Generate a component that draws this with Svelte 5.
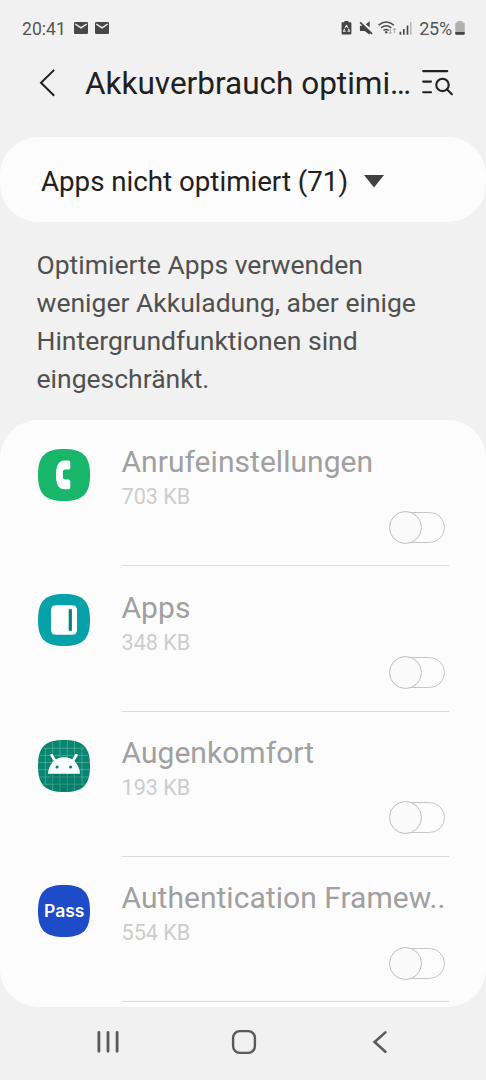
<script>
  const apps = [
    { name: 'Anrufeinstellungen', size: '703 KB', icon: 'phone' },
    { name: 'Apps', size: '348 KB', icon: 'edge' },
    { name: 'Augenkomfort', size: '193 KB', icon: 'android' },
    { name: 'Authentication Framew..', size: '554 KB', icon: 'pass' }
  ];

  const squircle = 'M26 0C45 0 52 7 52 26S45 52 26 52S0 45 0 26S7 0 26 0Z';
  const colors = {
    phone: '#18b66b',
    edge: '#07a1a9',
    android: '#078571',
    pass: '#1e4bc8'
  };

  let enabled = $state(apps.map(() => false));

  function toggle(i) {
    enabled[i] = !enabled[i];
  }
</script>

<div class="screen">
  <div class="status-bar">
    <span class="clock">20:41</span>
    <div class="mails">
      {#each [0, 1] as n (n)}
        <svg width="14" height="12" viewBox="0 0 14 12">
          <rect width="14" height="12" rx="1.2" fill="#484848" />
          <path d="M1.3 2L7 5.9L12.7 2" fill="none" stroke="#f1f1f1" stroke-width="1.5" />
        </svg>
      {/each}
    </div>

    <svg class="status-icons" width="74" height="18" viewBox="0 0 74 18">
      <!-- battery saver -->
      <path d="M3.4 2.3V1H7.4V2.3H9.4Q10.4 2.3 10.4 3.3V13.6Q10.4 14.6 9.4 14.6H1.6Q.6 14.6 .6 13.6V3.3Q.6 2.3 1.6 2.3Z" fill="#454545" />
      <path d="M4 7.8L5.5 5.6L7 7.8M3.6 8.8L2.6 11.2H4.6M7.4 8.8L8.4 11.2H6.4" fill="none" stroke="#f1f1f1" stroke-width="1.1" />
      <!-- sound off -->
      <path d="M18.6 2.9L19.7 1.8L31.6 13.2L30.5 14.4L28.7 12.9V14.8L23.6 10.9H18.9V5.7H21.4Z" fill="#454545" />
      <path d="M24.8 4.2L28.7 1.2V7.6Z" fill="#454545" />
      <!-- wifi -->
      <g fill="none" stroke="#4c4c4c" stroke-width="1.5">
        <path d="M37.6 5.1Q45.2-1.2 52.8 5.1" />
        <path d="M40.1 7.9Q45.2 3.7 50.3 7.9" />
        <path d="M42.5 10.5Q45.2 8.3 47.9 10.5" />
      </g>
      <circle cx="45.2" cy="12.2" r="1.2" fill="#484848" />
      <path d="M49.3 9V14M47.9 12.4L49.3 13.9L50.7 12.4M53.4 13V8M52 9.7L53.4 8.2L54.8 9.7" fill="none" stroke="#a5a5a5" stroke-width="1" />
      <!-- signal -->
      <path d="M59.4 11.8V14.8M62.8 8.9V14.8M66.5 5.4V14.8" stroke="#484848" stroke-width="1.7" />
      <path d="M69.8 2V14.8" stroke="#b5b5b5" stroke-width="1.5" />
    </svg>
    <span class="percent">25%</span>
    <svg class="battery" width="10" height="14" viewBox="0 0 10 14">
      <path d="M2.5 1.5V0H7.2V1.5H8.6Q9.7 1.5 9.7 2.6V12.7Q9.7 13.8 8.6 13.8H1.4Q.3 13.8 .3 12.7V2.6Q.3 1.5 1.4 1.5Z" fill="#b0b0b0" />
      <path d="M.3 11H9.7V12.7Q9.7 13.8 8.6 13.8H1.4Q.3 13.8 .3 12.7Z" fill="#454545" />
    </svg>
  </div>

  <header class="header">
    <button class="icon-btn back" aria-label="Zurück">
      <svg width="18" height="30" viewBox="0 0 18 30">
        <path d="M16.2 1.9L3 14.8L16.2 27.8" fill="none" stroke="#202020" stroke-width="2" />
      </svg>
    </button>
    <h1>Akkuverbrauch optimi…</h1>
    <button class="icon-btn" aria-label="Suche">
      <svg width="34" height="28" viewBox="0 0 34 28">
        <g fill="none" stroke="#202020" stroke-width="2.1" stroke-linecap="round">
          <path d="M2.2 2.1H26.3M2.2 12.6H10M2.2 23.3H10" />
          <circle cx="21.5" cy="15.9" r="6.2" />
          <path d="M26.1 20.5L30.9 25.2" />
        </g>
      </svg>
    </button>
  </header>

  <button class="filter">
    <span>Apps nicht optimiert (71)</span>
    <svg width="20" height="13" viewBox="0 0 20 13">
      <path d="M0 0H20L10 12.6Z" fill="#404040" />
    </svg>
  </button>

  <p class="description">
    Optimierte Apps verwenden<br />
    weniger Akkuladung, aber einige<br />
    Hintergrundfunktionen sind<br />
    eingeschränkt.
  </p>

  <div class="list">
    {#each apps as app, i (app.name)}
      <div class="row">
        <svg class="app-icon" width="52" height="52" viewBox="0 0 52 52">
          <path d={squircle} fill={colors[app.icon]} />
          {#if app.icon === 'phone'}
            <path
              d="M26.4 11.6H30.4Q32.3 11.6 32.3 13.5V18.7Q32.3 20.6 30.4 20.6H27.2Q24.9 20.6 24.9 22.9V28.2Q24.9 30.6 27.2 30.6H30.4Q32.3 30.6 32.3 32.5V38.4Q32.3 40.3 30.4 40.3H26.4C20.3 40.3 18 34.8 18 26S20.3 11.6 26.4 11.6Z"
              fill="#fff"
            />
          {:else if app.icon === 'edge'}
            <rect x="13" y="11.2" width="26" height="29.6" rx="4.5" fill="#fff" />
            <path d="M32.3 15.2V36.8" stroke="#087d86" stroke-width="3.2" />
          {:else if app.icon === 'android'}
            <path
              d="M7.4 8V44M14.6 2V50M21.9 0V52M29.3 0V52M36.5 1V51M44 6V46M6 8.3H46M2 15.4H50M0 22.5H52M0 29.7H52M1 37H51M5 44.2H47"
              stroke="#5fb5a6"
              stroke-width=".65"
            />
            <path d="M10 34H42L45 48Q39 52 26 52L15 47Z" fill="#06705f" opacity=".3" />
            <path d="M13.5 15L17.3 21M38.5 15L34.7 21" stroke="#fff" stroke-width="2.6" stroke-linecap="round" />
            <path d="M10 33.8C10.5 24 17.2 17.2 26 17.2S41.5 24 42 33.8Z" fill="#fff" />
            <circle cx="19.1" cy="27" r="1.6" fill="#078571" />
            <circle cx="32.6" cy="27" r="1.6" fill="#078571" />
          {:else}
            <text x="6" y="32.4" textLength="40.4" lengthAdjust="spacingAndGlyphs" class="pass-text">Pass</text>
          {/if}
        </svg>
        <div class="info">
          <div class="name">{app.name}</div>
          <div class="size">{app.size}</div>
          <button
            class="switch"
            class:on={enabled[i]}
            role="switch"
            aria-checked={enabled[i]}
            aria-label={app.name}
            onclick={() => toggle(i)}
          >
            <span class="thumb"></span>
          </button>
        </div>
      </div>
    {/each}
  </div>

  <nav class="nav-bar">
    <svg width="24" height="24" viewBox="0 0 24 24">
      <path d="M2.9 2.3V21.3M12 2.3V21.3M21.1 2.3V21.3" stroke="#5a5a5a" stroke-width="2.8" stroke-linecap="round" />
    </svg>
    <svg width="26" height="26" viewBox="0 0 26 26">
      <rect x="2.1" y="2.1" width="21.8" height="21.8" rx="6.6" fill="none" stroke="#5a5a5a" stroke-width="2.4" />
    </svg>
    <svg width="24" height="24" viewBox="0 0 24 24">
      <path d="M17.4 2.4L6.6 12L17.4 21.7" fill="none" stroke="#5a5a5a" stroke-width="2.6" stroke-linecap="round" />
    </svg>
  </nav>
</div>

<style>
  :global(body) {
    background: #f1f1f1;
  }

  .screen {
    display: flex;
    flex-direction: column;
    width: 486px;
    height: 1080px;
    overflow: hidden;
    background: #f1f1f1;
    font-family: Roboto, sans-serif;
    color: #202020;
  }

  svg {
    display: block;
    flex-shrink: 0;
  }

  button {
    padding: 0;
    border: none;
    background: none;
    font: inherit;
    color: inherit;
  }

  .status-bar {
    display: flex;
    align-items: center;
    flex-shrink: 0;
    height: 56px;
    padding: 0 21px 0 22px;
    font-size: 18px;
    color: #555;
    box-sizing: border-box;
  }

  .clock {
    font-size: 17.6px;
    padding-top: 1px;
  }

  .mails {
    display: flex;
    gap: 7px;
    margin-left: 8.5px;
  }

  .status-icons {
    margin-top: 2px;
    margin-left: auto;
  }

  .percent {
    margin-left: 4px;
    padding-top: 1px;
    letter-spacing: -0.2px;
  }

  .battery {
    margin-left: 3px;
  }

  .header {
    display: flex;
    align-items: center;
    flex-shrink: 0;
    height: 53px;
    padding: 0 31px 0 38px;
    margin-bottom: 28px;
  }

  .back {
    width: 47px;
  }

  h1 {
    flex: 1;
    margin: 0;
    padding-top: 2px;
    font-size: 31.5px;
    font-weight: 400;
    white-space: nowrap;
  }

  .filter {
    display: flex;
    align-items: center;
    flex-shrink: 0;
    gap: 16px;
    height: 84.5px;
    padding-top: 4px;
    padding-left: 41px;
    border-radius: 38px;
    background: #fcfcfc;
    font-size: 27.7px;
    box-sizing: border-box;
  }

  .description {
    flex-shrink: 0;
    margin: 24.9px 37px 22.4px 36.5px;
    font-size: 26.5px;
    line-height: 37.8px;
    color: #505050;
    white-space: nowrap;
  }

  .list {
    flex: 1;
    overflow: hidden;
    padding: 1px 37px 0 38px;
    border-radius: 38px;
    background: #fcfcfc;
  }

  .row {
    display: flex;
    height: 145.3px;
  }

  .app-icon {
    margin-top: 28px;
  }

  .info {
    display: flex;
    flex-direction: column;
    flex: 1;
    margin-left: 31.5px;
    padding-top: 23.4px;
    border-bottom: 1px solid #dcdcdc;
    box-sizing: border-box;
  }

  .name {
    font-size: 30px;
    line-height: 36px;
    letter-spacing: 0.04px;
    color: #a0a0a0;
    white-space: nowrap;
  }

  .size {
    padding-top: 2px;
    margin-bottom: -0.6px;
    font-size: 21.6px;
    line-height: 30px;
    color: #cdcdcd;
  }

  .switch {
    align-self: flex-end;
    display: flex;
    align-items: center;
    width: 55px;
    height: 31px;
    margin-right: 4px;
    border: 1px solid #c6c6c6;
    border-radius: 16px;
    box-sizing: border-box;
  }

  .thumb {
    flex-shrink: 0;
    width: 33px;
    height: 33px;
    margin-left: -2px;
    border: 1px solid #bdbdbd;
    border-radius: 50%;
    background: #fafafa;
    box-sizing: border-box;
  }

  .on .thumb {
    margin-left: 22px;
  }

  .pass-text {
    font-family: Inter, sans-serif;
    font-size: 17px;
    font-weight: 600;
    fill: #fff;
  }

  .nav-bar {
    display: flex;
    align-items: center;
    justify-content: space-between;
    flex-shrink: 0;
    height: 73px;
    padding: 0 94px 3px 96px;
    box-sizing: border-box;
  }
</style>
